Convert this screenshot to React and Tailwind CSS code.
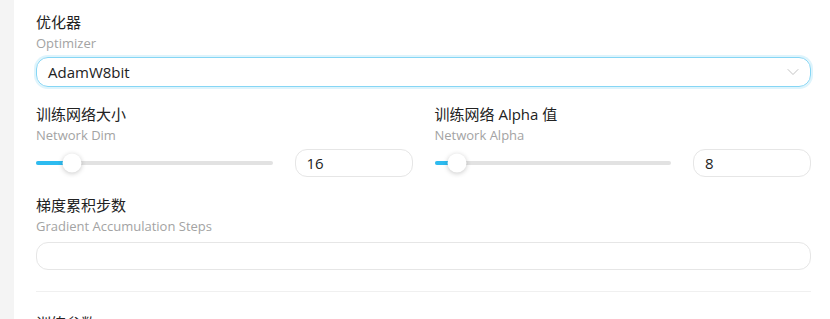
import { ChevronDown } from 'lucide-react';

const Label = ({ title, desc }) => (
  <div className="flex flex-col">
    <span className="text-[15px] leading-[20px] text-[#222]">{title}</span>
    <span className="mt-[2px] text-[13px] leading-[18px] text-[#a3a3a3]">{desc}</span>
  </div>
);

const Slider = ({ value, max = 128 }) => {
  const pos = `calc(9px + ${value / max} * (100% - 18px))`;
  return (
    <div className="relative flex-1 h-[20px] flex items-center">
      <div className="h-[4px] w-full rounded-full bg-[#e2e2e2]" />
      <div
        className="absolute left-0 top-1/2 -translate-y-1/2 h-[4px] rounded-full bg-[#2dbbf0]"
        style={{ width: pos }}
      />
      <div
        className="absolute top-1/2 -translate-y-1/2 -translate-x-1/2 size-[19px] rounded-full bg-white shadow-[0_1px_5px_rgba(0,0,0,0.22)]"
        style={{ left: pos }}
      />
    </div>
  );
};

const NumberField = ({ value }) => (
  <div className="w-[118px] shrink-0 h-[28px] rounded-xl border border-[#e6e6e6] bg-white flex items-center px-[11px] text-[15px] text-[#222]">
    {value}
  </div>
);

const SliderField = ({ title, desc, value }) => (
  <div className="flex flex-col">
    <Label title={title} desc={desc} />
    <div className="mt-[5px] flex items-center gap-[22px]">
      <Slider value={value} />
      <NumberField value={value} />
    </div>
  </div>
);

export default function App() {
  return (
    <div className="flex min-h-[319px] w-[830px] bg-white font-['Open_Sans','Noto_Sans_CJK_SC',sans-serif]">
      <div className="w-[14px] shrink-0 bg-[#f4f4f4]" />
      <div className="flex-1 pl-[22px] pr-[19px] pt-[12px]">
        <Label title="优化器" desc="Optimizer" />
        <div className="mt-[5px] h-[30px] rounded-xl border border-[#86d6f5] shadow-[0_0_0_2px_rgba(125,211,245,0.25)] flex items-center justify-between pl-[11px] pr-[7px]">
          <span className="text-[15px] text-[#222]">AdamW8bit</span>
          <ChevronDown size={20} strokeWidth={1.1} className="text-[#bdbdbd]" />
        </div>

        <div className="mt-[17px] grid grid-cols-2 gap-[22px]">
          <SliderField title="训练网络大小" desc="Network Dim" value={16} />
          <SliderField title="训练网络 Alpha 值" desc="Network Alpha" value={8} />
        </div>

        <div className="mt-[18px]">
          <Label title="梯度累积步数" desc="Gradient Accumulation Steps" />
        </div>
        <div className="mt-[7px] h-[28px] rounded-xl border border-[#e6e6e6]" />

        <div className="mt-[21px] h-px bg-[#f0f0f0]" />

        <div className="mt-[21px] text-[15px] leading-[20px] text-[#222]">训练参数</div>
      </div>
    </div>
  );
}
